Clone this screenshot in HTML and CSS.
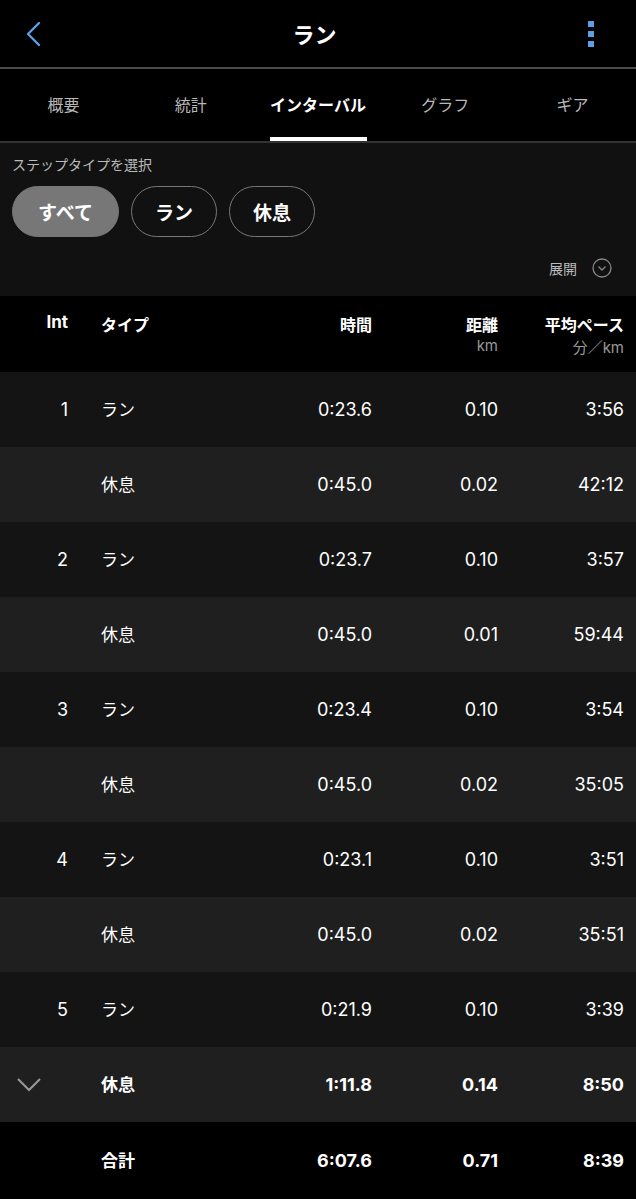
FILE: index.html
```html
<!DOCTYPE html>
<html lang="ja">
<head>
  <meta charset="UTF-8">
  <title>ラン</title>
  <link rel="stylesheet" href="styles.css">
</head>
<body>

  <header class="topbar">
    <svg class="back" width="16" height="26" viewBox="0 0 16 26"><path d="M14 2 L3 13 L14 24" fill="none" stroke="#5b9fe6" stroke-width="2.4" stroke-linecap="round" stroke-linejoin="round"/></svg>
    <h1>ラン</h1>
    <div class="kebab"><span></span><span></span><span></span></div>
  </header>

  <nav class="tabs">
    <div class="tab">概要</div>
    <div class="tab">統計</div>
    <div class="tab active">インターバル</div>
    <div class="tab">グラフ</div>
    <div class="tab">ギア</div>
  </nav>

  <section class="filter">
    <div class="label">ステップタイプを選択</div>
    <div class="chips">
      <button class="chip on">すべて</button>
      <button class="chip">ラン</button>
      <button class="chip">休息</button>
    </div>
    <div class="expand">
      展開
      <svg width="20" height="20" viewBox="0 0 20 20"><circle cx="10" cy="10" r="9" fill="none" stroke="#888" stroke-width="1.3"/><path d="M6.5 8.5 L10 12 L13.5 8.5" fill="none" stroke="#888" stroke-width="1.3"/></svg>
    </div>
  </section>

  <div class="grid head">
    <div class="c-int">Int</div>
    <div class="c-type">タイプ</div>
    <div class="c-num">時間</div>
    <div class="c-num">距離<small>km</small></div>
    <div class="c-num">平均ペース<small>分／km</small></div>
  </div>

  <div id="rows"></div>

  <div class="grid row alt bold">
    <div class="c-int"><svg width="24" height="14" viewBox="0 0 24 14"><path d="M1 1 L12 12 L23 1" fill="none" stroke="#999" stroke-width="2"/></svg></div>
    <div class="c-type">休息</div>
    <div class="c-num">1:11.8</div>
    <div class="c-num">0.14</div>
    <div class="c-num">8:50</div>
  </div>
  <div class="grid row total bold">
    <div class="c-int"></div>
    <div class="c-type">合計</div>
    <div class="c-num">6:07.6</div>
    <div class="c-num">0.71</div>
    <div class="c-num">8:39</div>
  </div>

<script>
const laps = [
  ["1", "ラン", "0:23.6", "0.10", "3:56"],
  ["", "休息", "0:45.0", "0.02", "42:12"],
  ["2", "ラン", "0:23.7", "0.10", "3:57"],
  ["", "休息", "0:45.0", "0.01", "59:44"],
  ["3", "ラン", "0:23.4", "0.10", "3:54"],
  ["", "休息", "0:45.0", "0.02", "35:05"],
  ["4", "ラン", "0:23.1", "0.10", "3:51"],
  ["", "休息", "0:45.0", "0.02", "35:51"],
  ["5", "ラン", "0:21.9", "0.10", "3:39"]
];

const rows = document.getElementById("rows");
laps.forEach((l, i) => {
  const div = document.createElement("div");
  div.className = "grid row" + (i % 2 ? " alt" : "");
  div.innerHTML = `
    <div class="c-int">${l[0]}</div>
    <div class="c-type">${l[1]}</div>
    <div class="c-num">${l[2]}</div>
    <div class="c-num">${l[3]}</div>
    <div class="c-num">${l[4]}</div>
  `;
  rows.appendChild(div);
});
</script>

</body>
</html>
```

FILE: styles.css
```css
body {
  margin: 0;
  background: #000;
  color: #fff;
  font-family: Inter, "Noto Sans CJK JP", sans-serif;
}

.topbar {
  height: 67px;
  display: flex;
  align-items: center;
  justify-content: space-between;
  padding: 0 42px 0 25px;
  border-bottom: 2px solid #4a4a4a;
}
.topbar h1 { margin: 0; font-size: 22px; font-weight: bold; margin-top: -2px; }
.kebab { display: flex; flex-direction: column; gap: 4px; }
.kebab span { width: 6px; height: 6px; background: #5b9fe6; }

.tabs {
  display: flex;
  height: 72px;
  border-bottom: 2px solid #333;
}
.tab {
  flex: 1;
  display: flex;
  align-items: center;
  justify-content: center;
  font-size: 16px;
  color: #b8b8b8;
  padding-bottom: 2px;
}
.tab.active {
  color: #fff;
  font-weight: bold;
  position: relative;
}
.tab.active::after {
  content: "";
  position: absolute;
  bottom: 0;
  left: 50%;
  width: 97px;
  margin-left: -48px;
  height: 4px;
  background: #fff;
}

.filter {
  background: #111;
  padding: 11px 12px 0;
  height: 142px;
}
.label { font-size: 14px; color: #bbb; }
.chips { display: flex; gap: 12px; margin-top: 12px; }
.chip {
  height: 51px;
  padding: 0 23px;
  border-radius: 26px;
  border: 1.5px solid #777;
  background: transparent;
  color: #fff;
  font: bold 19px "Noto Sans CJK JP", sans-serif;
}
.chip.on { background: #777; border-color: #777; padding: 0 25px; }
.expand {
  display: flex;
  justify-content: flex-end;
  align-items: center;
  gap: 15px;
  margin-top: 21px;
  padding-right: 12px;
  font-size: 14px;
  color: #bbb;
}

.grid {
  display: grid;
  grid-template-columns: 68px 178px 126px 126px 126px;
  padding-right: 12px;
}
.c-type {
  padding-left: 33px;
  font-family: "Noto Sans CJK JP", sans-serif;
}
.c-int, .c-num { text-align: right; }

.head {
  height: 76px;
  padding-top: 16px;
  box-sizing: border-box;
  font-size: 16px;
  font-weight: bold;
}
.head .c-int { font-size: 17px; }
.head small {
  display: block;
  font-size: 15px;
  font-weight: normal;
  color: #999;
  margin-top: 0;
}

.row {
  height: 75px;
  align-items: center;
  font-size: 18px;
  background: #141414;
}
.row .c-type { font-size: 17px; padding-bottom: 3px; }
.row.alt { background: #1f1f1f; }
.row.total { background: #000; height: 77px; }
.bold { font-weight: bold; }
.row .c-int svg { display: block; margin-left: 17px; }
```
